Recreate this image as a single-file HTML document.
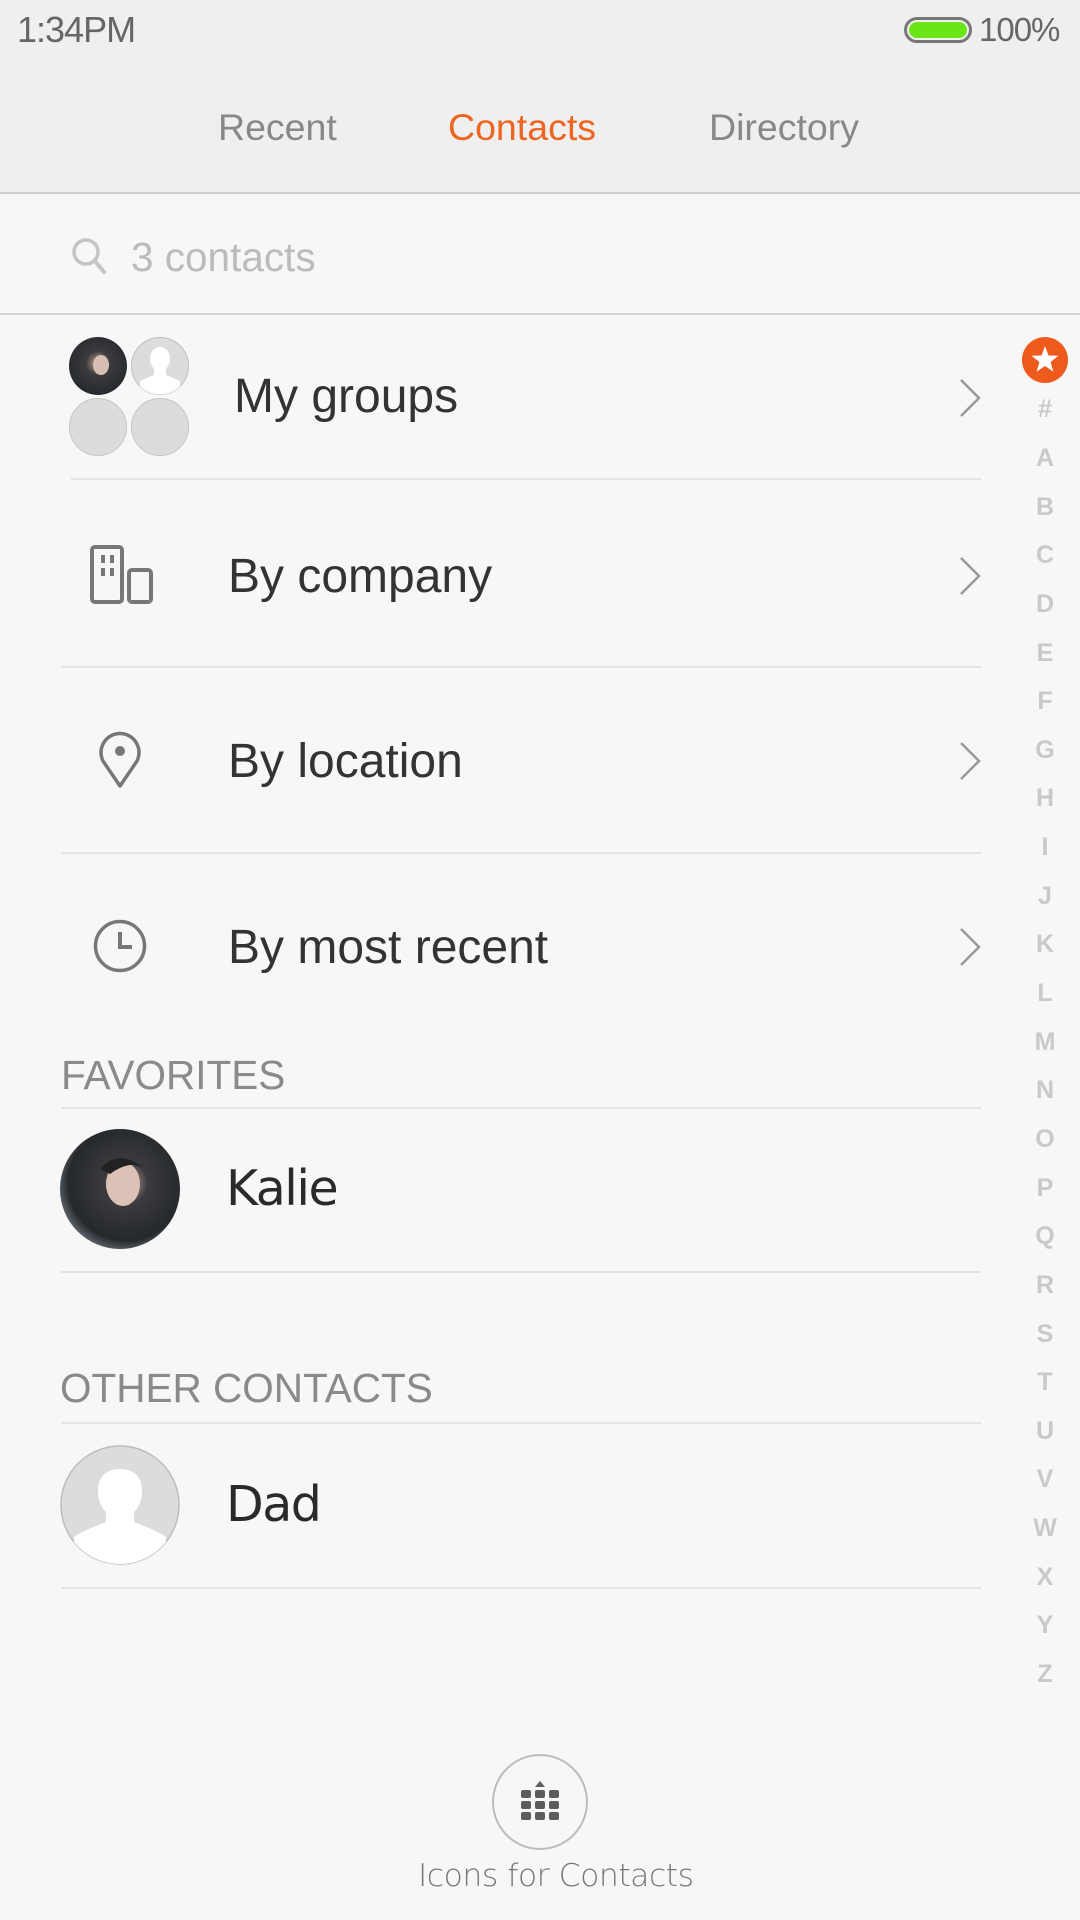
<!DOCTYPE html>
<html><head><meta charset="utf-8"><style>
*{margin:0;padding:0;box-sizing:border-box}
body{width:1080px;height:1920px;background:#f7f7f7;font-family:"Liberation Sans",sans-serif;position:relative;overflow:hidden}
.a{position:absolute;white-space:nowrap}
.hdr{position:absolute;left:0;top:0;width:1080px;height:194px;background:#efefef;border-bottom:2px solid #cfcfcf}
.line{position:absolute;height:2px;background:#e3e3e3}
.row{font-size:48px;color:#333;line-height:60px}
.chev{position:absolute;left:958px}
.sec{font-size:40.5px;color:#8a8a8a;line-height:50px}
.idx{position:absolute;left:1025px;width:40px;text-align:center;font-weight:bold;font-size:25px;color:#c9c9c9;line-height:30px}
</style></head><body>
<div class="hdr"></div>
<div class="a" style="left:17px;top:9px;font-size:36px;color:#666;line-height:42px;letter-spacing:-1px">1:34PM</div>
<div class="a" style="left:904px;top:17px;width:68px;height:26px;border:3px solid #777;border-radius:13px;padding:2px"><div style="width:100%;height:100%;background:#6ae516;border-radius:9px"></div></div>
<div class="a" style="left:979px;top:10px;font-size:33px;color:#666;line-height:40px;letter-spacing:-1px">100%</div>
<div class="a" style="left:218px;top:105px;font-size:37.5px;color:#888;line-height:44px">Recent</div>
<div class="a" style="left:448px;top:105px;font-size:37.5px;color:#ee6520;line-height:44px">Contacts</div>
<div class="a" style="left:709px;top:105px;font-size:37.5px;color:#888;line-height:44px">Directory</div>

<svg class="a" style="left:70px;top:236px" width="40" height="40" viewBox="0 0 40 40"><circle cx="16" cy="16" r="12" fill="none" stroke="#c4c4c4" stroke-width="3.5"/><line x1="24.5" y1="24.5" x2="34" y2="36" stroke="#c4c4c4" stroke-width="4" stroke-linecap="round"/></svg>
<div class="a" style="left:131px;top:232px;font-size:40.5px;color:#bbb;line-height:50px">3 contacts</div>
<div class="line" style="left:0;top:313px;width:1080px;background:#d5d5d5"></div>

<svg class="a" style="left:69px;top:337px" width="122" height="122" viewBox="0 0 122 122">
<defs><clipPath id="c2"><circle cx="91" cy="29" r="28.5"/></clipPath>
<radialGradient id="g1" cx="50%" cy="45%" r="60%"><stop offset="0" stop-color="#caa89a"/><stop offset="0.35" stop-color="#3b3b3d"/><stop offset="1" stop-color="#22262b"/></radialGradient></defs>
<circle cx="29" cy="29" r="29" fill="url(#g1)"/>
<ellipse cx="32" cy="28" rx="8" ry="10" fill="#d8bfb4"/>
<circle cx="91" cy="29" r="28.5" fill="#dcdcdc" stroke="#bdbdbd" stroke-width="1"/>
<g clip-path="url(#c2)" fill="#fff"><ellipse cx="91" cy="22" rx="10" ry="12"/><path d="M85 30h12v8l14 6v20h-40v-20l14-6z"/></g>
<circle cx="29" cy="90" r="28.5" fill="#dcdcdc" stroke="#c5c5c5" stroke-width="1"/>
<circle cx="91" cy="90" r="28.5" fill="#dcdcdc" stroke="#c5c5c5" stroke-width="1"/>
</svg>
<div class="a row" style="left:234px;top:367px">My groups</div>
<svg class="chev" style="top:378px" width="24" height="40" viewBox="0 0 24 40"><path d="M3 2 L21 20 L3 38" fill="none" stroke="#999" stroke-width="2.5"/></svg>
<div class="line" style="left:71px;top:478px;width:910px"></div>

<svg class="a" style="left:86px;top:541px" width="70" height="66" viewBox="0 0 70 66"><rect x="6" y="6" width="30" height="55" rx="3" fill="none" stroke="#777" stroke-width="4"/><rect x="43" y="29" width="22" height="32" rx="3" fill="none" stroke="#777" stroke-width="4"/><rect x="15" y="14" width="4" height="8" fill="#777"/><rect x="24" y="14" width="4" height="8" fill="#777"/><rect x="15" y="27" width="4" height="8" fill="#777"/><rect x="24" y="27" width="4" height="8" fill="#777"/></svg>
<div class="a row" style="left:228px;top:547px">By company</div>
<svg class="chev" style="top:556px" width="24" height="40" viewBox="0 0 24 40"><path d="M3 2 L21 20 L3 38" fill="none" stroke="#999" stroke-width="2.5"/></svg>
<div class="line" style="left:61px;top:666px;width:920px"></div>

<svg class="a" style="left:96px;top:730px" width="48" height="60" viewBox="0 0 48 60"><path d="M24 56 L7 31 A19 19 0 1 1 41 31 Z" fill="none" stroke="#777" stroke-width="3.5" stroke-linejoin="round"/><circle cx="24" cy="21" r="5" fill="#777"/></svg>
<div class="a row" style="left:228px;top:732px">By location</div>
<svg class="chev" style="top:741px" width="24" height="40" viewBox="0 0 24 40"><path d="M3 2 L21 20 L3 38" fill="none" stroke="#999" stroke-width="2.5"/></svg>
<div class="line" style="left:61px;top:852px;width:920px"></div>

<svg class="a" style="left:92px;top:918px" width="56" height="56" viewBox="0 0 56 56"><circle cx="28" cy="28" r="24.5" fill="none" stroke="#777" stroke-width="3.5"/><path d="M28 14 V29 H40" fill="none" stroke="#777" stroke-width="4"/></svg>
<div class="a row" style="left:228px;top:918px">By most recent</div>
<svg class="chev" style="top:927px" width="24" height="40" viewBox="0 0 24 40"><path d="M3 2 L21 20 L3 38" fill="none" stroke="#999" stroke-width="2.5"/></svg>

<div class="a sec" style="left:61px;top:1050px">FAVORITES</div>
<div class="line" style="left:61px;top:1107px;width:920px"></div>
<svg class="a" style="left:60px;top:1129px" width="120" height="120" viewBox="0 0 120 120">
<defs><radialGradient id="g2" cx="55%" cy="45%" r="60%"><stop offset="0" stop-color="#d4b4a6"/><stop offset="0.3" stop-color="#3a3b3e"/><stop offset="0.8" stop-color="#25282c"/><stop offset="1" stop-color="#6d767c"/></radialGradient></defs>
<circle cx="60" cy="60" r="60" fill="url(#g2)"/>
<ellipse cx="63" cy="55" rx="17" ry="22" fill="#dcc2b6"/>
<path d="M40 40 Q60 18 84 40 Q70 30 50 45 Z" fill="#222"/>
</svg>
<div class="a" style="left:226px;top:1158px;font-size:49px;color:#2a2a2a;line-height:62px;font-family:'DejaVu Sans',sans-serif;letter-spacing:-1.5px">Kalie</div>
<div class="line" style="left:61px;top:1271px;width:920px"></div>

<div class="a sec" style="left:60px;top:1363px">OTHER CONTACTS</div>
<div class="line" style="left:61px;top:1422px;width:920px"></div>
<svg class="a" style="left:60px;top:1445px" width="120" height="120" viewBox="0 0 120 120">
<defs><clipPath id="c3"><circle cx="60" cy="60" r="59"/></clipPath></defs>
<circle cx="60" cy="60" r="59" fill="#dcdcdc" stroke="#bcbcbc" stroke-width="1.5"/>
<g clip-path="url(#c3)" fill="#fff"><path d="M60 24 C45 24 38 33 38 46 C38 56 42 63 46 67 L46 77 C34 82 22 86 14 92 L14 120 L106 120 L106 92 C98 86 86 82 74 77 L74 67 C78 63 82 56 82 46 C82 33 75 24 60 24Z"/></g>
</svg>
<div class="a" style="left:226px;top:1474px;font-size:49px;color:#2a2a2a;line-height:62px;font-family:'DejaVu Sans',sans-serif;letter-spacing:-1.5px">Dad</div>
<div class="line" style="left:61px;top:1587px;width:920px"></div>

<svg class="a" style="left:1022px;top:337px" width="46" height="46" viewBox="0 0 46 46"><circle cx="23" cy="23" r="23" fill="#ee5a1c"/><path d="M23 9 L26.5 18.5 L36.5 18.8 L28.6 25 L31.4 34.8 L23 29 L14.6 34.8 L17.4 25 L9.5 18.8 L19.5 18.5Z" fill="#fff"/></svg>
<div class="idx" style="top:394px">#</div>
<div class="idx" style="top:443px">A</div><div class="idx" style="top:492px">B</div><div class="idx" style="top:540px">C</div><div class="idx" style="top:589px">D</div><div class="idx" style="top:638px">E</div><div class="idx" style="top:686px">F</div><div class="idx" style="top:735px">G</div><div class="idx" style="top:783px">H</div><div class="idx" style="top:832px">I</div><div class="idx" style="top:881px">J</div><div class="idx" style="top:929px">K</div><div class="idx" style="top:978px">L</div><div class="idx" style="top:1027px">M</div><div class="idx" style="top:1075px">N</div><div class="idx" style="top:1124px">O</div><div class="idx" style="top:1173px">P</div><div class="idx" style="top:1221px">Q</div><div class="idx" style="top:1270px">R</div><div class="idx" style="top:1319px">S</div><div class="idx" style="top:1367px">T</div><div class="idx" style="top:1416px">U</div><div class="idx" style="top:1464px">V</div><div class="idx" style="top:1513px">W</div><div class="idx" style="top:1562px">X</div><div class="idx" style="top:1610px">Y</div><div class="idx" style="top:1659px">Z</div>

<div class="a" style="left:492px;top:1754px;width:96px;height:96px;border:2px solid #bdbdbd;border-radius:50%"></div>
<svg class="a" style="left:519px;top:1777px" width="42" height="44" viewBox="0 0 42 44"><path d="M21 4 L26 10 L16 10Z" fill="#5c5c5c"/><g fill="#5c5c5c"><rect x="2" y="13" width="10" height="8" rx="2"/><rect x="16" y="13" width="10" height="8" rx="2"/><rect x="30" y="13" width="10" height="8" rx="2"/><rect x="2" y="24" width="10" height="8" rx="2"/><rect x="16" y="24" width="10" height="8" rx="2"/><rect x="30" y="24" width="10" height="8" rx="2"/><rect x="2" y="35" width="10" height="8" rx="2"/><rect x="16" y="35" width="10" height="8" rx="2"/><rect x="30" y="35" width="10" height="8" rx="2"/></g></svg>
<div class="a" style="left:418px;top:1856px;font-size:31.5px;color:#777;line-height:40px;font-family:'DejaVu Sans',sans-serif;font-weight:300;letter-spacing:-0.5px">Icons for Contacts</div>
</body></html>
